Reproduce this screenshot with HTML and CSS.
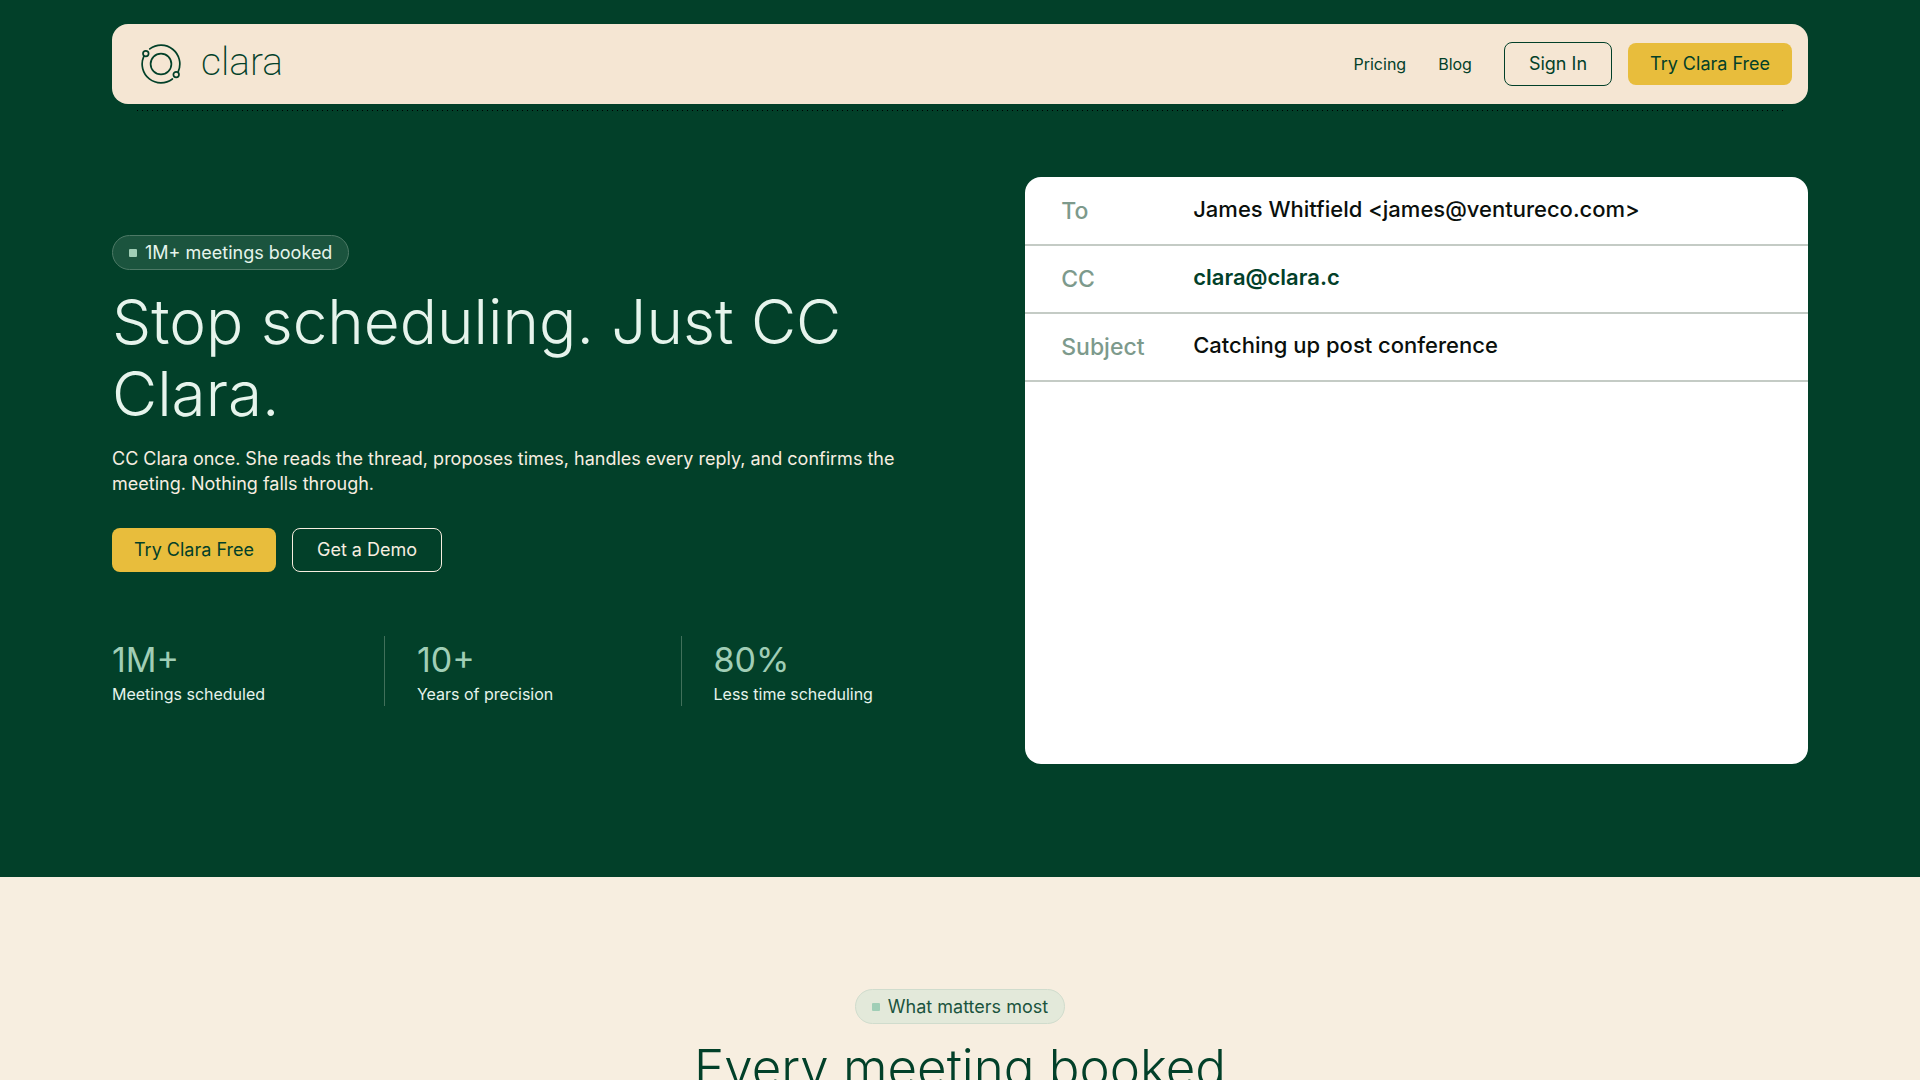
FILE: index.html
```html
<!DOCTYPE html>
<html lang="en">
<head>
    <meta charset="UTF-8">
    <meta name="viewport" content="width=device-width, initial-scale=1.0">
    <title>Clara</title>
    <link rel="stylesheet" href="styles.css">
</head>
<body>
    <div class="top">
        <header class="container">
            <nav class="navbar">
                <a href="#" class="logo">
                    <svg class="logo-icon" viewBox="-20 -20 40 40" aria-hidden="true">
                        <circle r="10.4"/>
                        <circle cx="-15.2" cy="-10.4" r="2.8"/>
                        <circle cx="15.2" cy="10.6" r="2.8"/>
                        <path d="M-11.2-15.1A18.8 18.8 0 0 1 17.3 7.4"/>
                        <path d="M-17.3-7.4A18.8 18.8 0 0 0 11.4 15"/>
                    </svg>
                    <span class="logo-text">clara</span>
                </a>
                <div class="nav-links">
                    <a href="#pricing">Pricing</a>
                    <a href="#blog">Blog</a>
                    <div class="nav-buttons">
                        <button type="button" class="btn btn-outline-dark">Sign In</button>
                        <button type="button" class="btn btn-gold">Try Clara Free</button>
                    </div>
                </div>
            </nav>
            <div class="dots"></div>
        </header>

        <section class="container hero">
            <div class="hero-text">
                <span class="badge">1M+ meetings booked</span>
                <h1>Stop scheduling. Just CC Clara.</h1>
                <p class="lead">CC Clara once. She reads the thread, proposes times, handles every reply, and confirms the meeting. Nothing falls through.</p>
                <div class="hero-buttons">
                    <button type="button" class="btn btn-gold">Try Clara Free</button>
                    <button type="button" class="btn btn-outline-light">Get a Demo</button>
                </div>
                <div class="stats">
                    <div class="stat">
                        <div class="stat-number">1M+</div>
                        <div class="stat-label">Meetings scheduled</div>
                    </div>
                    <div class="stat">
                        <div class="stat-number">10+</div>
                        <div class="stat-label">Years of precision</div>
                    </div>
                    <div class="stat">
                        <div class="stat-number">80%</div>
                        <div class="stat-label">Less time scheduling</div>
                    </div>
                </div>
            </div>

            <dl class="email">
                <div class="email-row">
                    <dt>To</dt>
                    <dd>James Whitfield &lt;james@ventureco.com&gt;</dd>
                </div>
                <div class="email-row">
                    <dt>CC</dt>
                    <dd class="email-clara">clara@clara.c</dd>
                </div>
                <div class="email-row">
                    <dt>Subject</dt>
                    <dd>Catching up post conference</dd>
                </div>
            </dl>
        </section>
    </div>

    <section class="matters">
        <span class="badge badge-light">What matters most</span>
        <h2>Every meeting booked</h2>
    </section>
</body>
</html>
```
FILE: styles.css
```css
* {
    box-sizing: border-box;
}

body {
    margin: 0;
    font-family: Inter, Arial, sans-serif;
    font-size: 18px;
    line-height: 25px;
    color: #024029;
    background-color: #f7eee0;
}

h1, h2, p, dl, dd {
    margin: 0;
}

a {
    color: inherit;
    text-decoration: none;
}

.container {
    padding: 0 112px;
}

.top {
    padding-top: 24px;
    background-color: #024029;
}

/* navbar */
.navbar {
    display: flex;
    align-items: center;
    justify-content: space-between;
    height: 80px;
    padding: 0 16px 0 29px;
    background-color: #f5e6d3;
    border-radius: 16px;
}

.logo {
    display: flex;
    align-items: center;
    gap: 20px;
}

.logo-icon {
    width: 40px;
    height: 40px;
    fill: none;
    stroke: #024029;
    stroke-width: 1.7;
    stroke-linecap: round;
}

.logo-text {
    padding-bottom: 4px;
    font-family: Roboto, sans-serif;
    font-size: 39px;
    font-weight: 200;
    line-height: 44px;
}

.nav-links {
    display: flex;
    align-items: center;
    gap: 32px;
    font-size: 16px;
}

.nav-buttons, .hero-buttons {
    display: flex;
    align-items: center;
    gap: 16px;
}

.dots {
    height: 1px;
    margin: 6px 24px 0;
    background: repeating-linear-gradient(to right, transparent 0 1px, #000 1px 2px, transparent 2px 5px);
}

.btn {
    padding: 8px 24px;
    border: none;
    border-radius: 8px;
    font-family: inherit;
    font-size: 18px;
    line-height: 26px;
    cursor: pointer;
}

.btn-gold {
    padding: 8px 22px;
    color: #024029;
    background-color: #e8bd3c;
}

.btn-outline-dark {
    color: #024029;
    background: none;
    border: 1px solid #024029;
}

.btn-outline-light {
    color: #f7eee0;
    background: none;
    border: 1px solid #f7eee0;
}

/* hero */
.hero {
    display: grid;
    grid-template-columns: 21fr 19fr;
    align-items: center;
    gap: 48px;
    padding-top: 66px;
    padding-bottom: 113px;
}

.badge {
    display: inline-flex;
    align-items: center;
    gap: 8px;
    padding: 4px 16px;
    border: 1px solid #4d7966;
    border-radius: 18px;
    color: #e6f4ec;
    background-color: #1b543e;
}

.badge::before {
    content: "";
    width: 8px;
    height: 8px;
    border-radius: 1px;
    background-color: #a0ceb6;
}

.badge-light {
    border-color: #d0dccd;
    color: #1b543e;
    background-color: #e3e9da;
}

h1 {
    margin-top: 16px;
    font-size: 62px;
    font-weight: 300;
    line-height: 72px;
    color: #e6f4ec;
}

.lead {
    max-width: 800px;
    margin-top: 16px;
    color: #f7eee0;
}

.hero-buttons {
    align-items: stretch;
    margin-top: 32px;
}

.stats {
    display: grid;
    grid-template-columns: 11fr 12fr 12fr;
    margin-top: 64px;
}

.stat {
    padding: 4px 0 1px;
}

.stat + .stat {
    padding-left: 32px;
    border-left: 1px solid #41705a;
}

.stat-number {
    margin-bottom: 3px;
    font-size: 34px;
    line-height: 40px;
    color: #a0ceb6;
}

.stat-label {
    font-size: 16px;
    line-height: 22px;
    color: #e6f4ec;
}

/* email card */
.email {
    aspect-ratio: 4 / 3;
    padding-top: 1px;
    overflow: hidden;
    font-size: 22px;
    line-height: 32px;
    background-color: #fff;
    border-radius: 16px;
}

.email-row {
    display: grid;
    grid-template-columns: 132px 1fr;
    padding: 15px 36px 17px;
    border-bottom: 2px solid #c4cbc5;
    font-weight: 500;
}

.email-row dt {
    padding-top: 2px;
    font-size: 23px;
    color: #7d9a8c;
}

.email-row dd {
    padding-bottom: 2px;
    color: #0a0f0c;
}

.email-row .email-clara {
    font-weight: 600;
    color: #024029;
}

/* what matters most */
.matters {
    padding: 112px;
    text-align: center;
}

h2 {
    margin-top: 12px;
    font-size: 51px;
    font-weight: 300;
    line-height: 64px;
}
```
